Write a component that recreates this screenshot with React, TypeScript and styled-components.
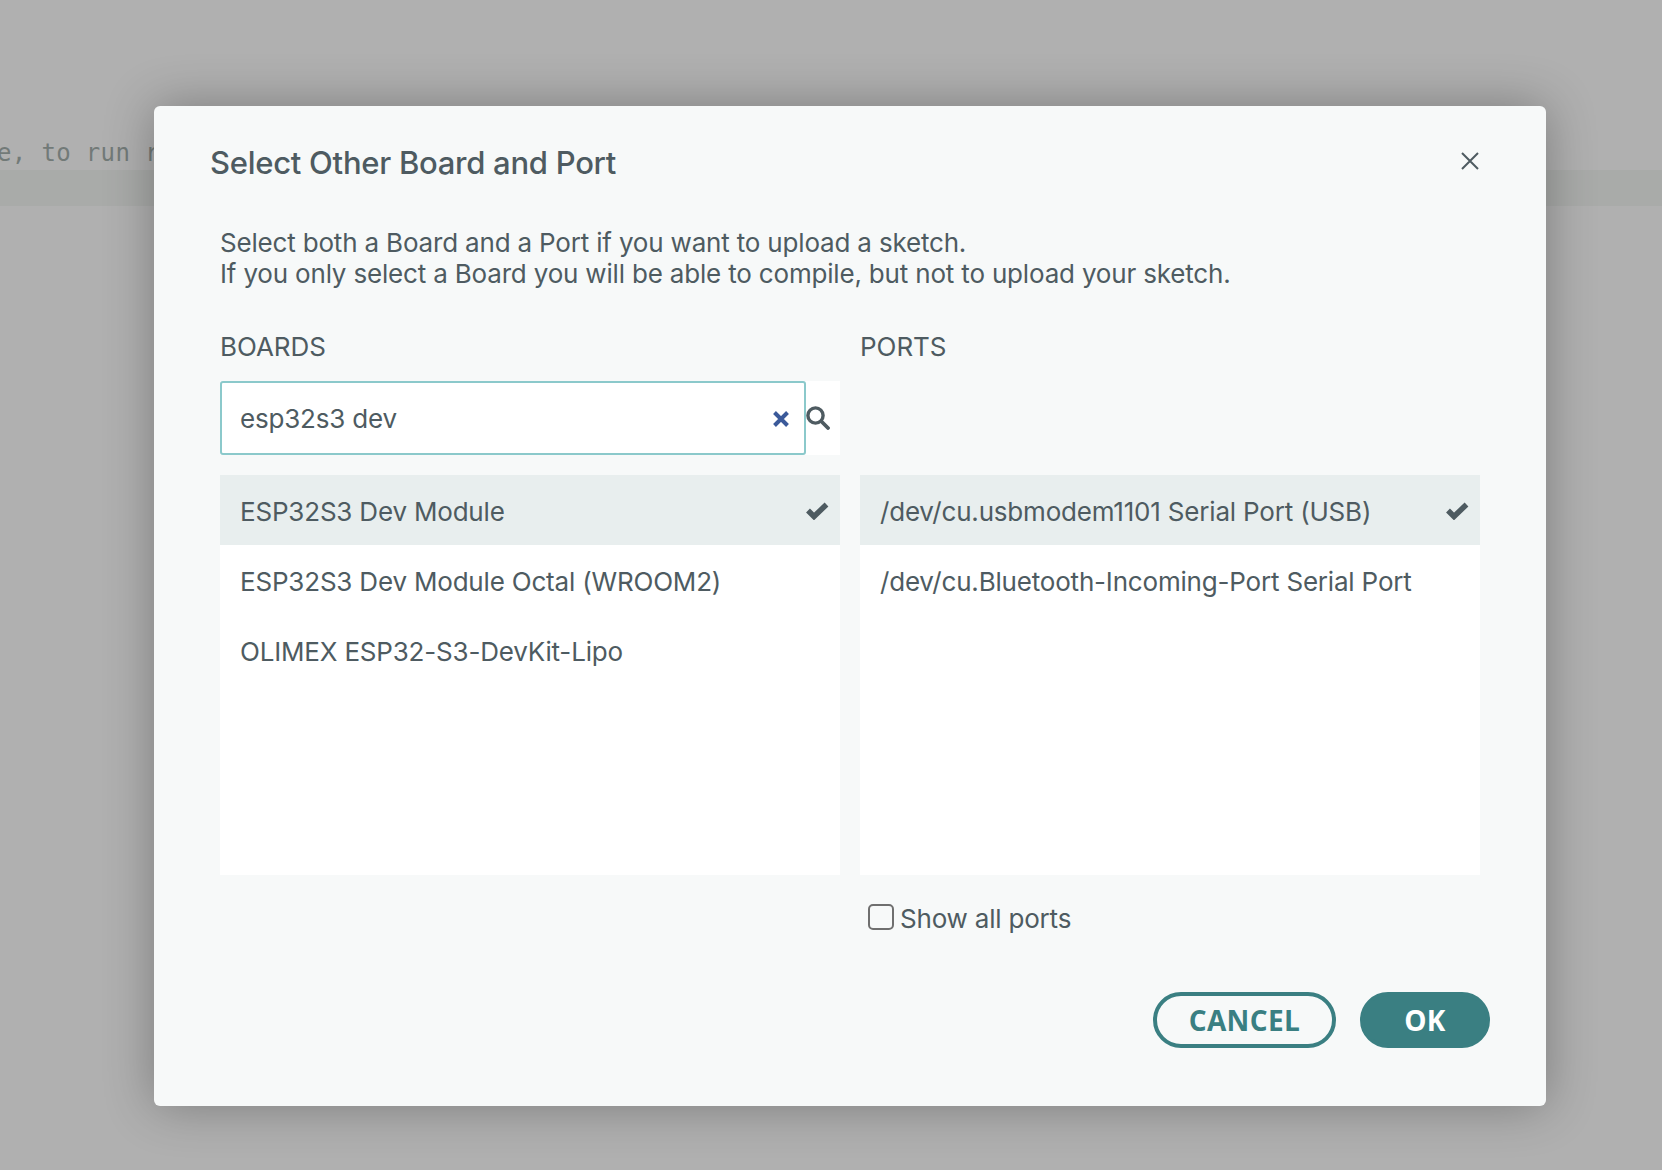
import * as React from "react";
import styled, { createGlobalStyle } from "styled-components";

const GlobalStyle = createGlobalStyle`
  html, body {
    margin: 0;
    padding: 0;
    height: 100%;
    overflow: hidden;
  }
  body {
    background: #b0b0b0;
    font-family: Inter, "Liberation Sans", sans-serif;
    color: #4e5b61;
  }
`;

const Page = styled.div`
  width: 1662px;
  height: 1170px;
  overflow: hidden;
  background: #b0b0b0;
`;

const EditorLine = styled.div`
  margin-top: 136px;
  height: 34px;
  line-height: 34px;
  text-indent: -3px;
  font-family: "DejaVu Sans Mono", "Liberation Mono", monospace;
  font-size: 24px;
  white-space: pre;
  color: #727a78;
  letter-spacing: 0.35px;
`;

const EditorHighlight = styled.div`
  height: 36px;
  background: #a9aba9;
`;

const Overlay = styled.div`
  position: absolute;
  inset: 0;
  padding: 106px 0 0 154px;
`;

const Dialog = styled.div`
  box-sizing: border-box;
  width: 1392px;
  height: 1000px;
  border-radius: 6px;
  background: #f7f9f9;
  box-shadow: 0 0 50px rgba(0, 0, 0, 0.3);
  padding: 36px 66px 0 56px;
  display: flex;
  flex-direction: column;
`;

const Header = styled.div`
  display: flex;
  justify-content: space-between;
  align-items: center;
  height: 40px;
  padding-bottom: 1px;
  margin-bottom: -1px;
  font-size: 31px;
  font-weight: 500;
  letter-spacing: -0.27px;
  color: #4e5b61;
`;

const CloseIcon = styled.svg`
  width: 20px;
  height: 20px;
  margin-top: -2px;
  stroke: #4e5b61;
  stroke-width: 2;
  fill: none;
`;

const Body = styled.div`
  padding: 0 0 0 10px;
  display: flex;
  flex-direction: column;
`;

const Intro = styled.p`
  margin: 46px 0 0;
  font-size: 26px;
  line-height: 30.5px;
  letter-spacing: -0.18px;
`;

const Columns = styled.div`
  margin-top: 41px;
  display: grid;
  grid-template-columns: 620px 620px;
  column-gap: 20px;
`;

const Column = styled.div`
  display: flex;
  flex-direction: column;
`;

const ColumnTitle = styled.div`
  height: 34px;
  line-height: 34px;
  font-size: 26px;
  margin-bottom: 17px;
  letter-spacing: -0.05px;
`;

const SearchBar = styled.div`
  display: flex;
  align-items: center;
  height: 74px;
  background: #fff;
  color: #4e5b61;
  margin-bottom: 20px;
`;

const SearchSpacer = styled.div`
  height: 74px;
  margin-bottom: 20px;
`;

const SearchField = styled.div`
  box-sizing: border-box;
  flex: 0 0 586px;
  height: 74px;
  display: flex;
  align-items: center;
  justify-content: space-between;
  padding: 1px 14px 0 18px;
  border: 2px solid #8bc9cb;
  border-radius: 3px;
  font-size: 26px;
  letter-spacing: -0.2px;
  background: #fff;
`;

const SearchIcon = styled.svg`
  width: 24px;
  height: 24px;
  fill: none;
  stroke: #4e5b61;
`;

const ClearIcon = styled.svg`
  width: 18px;
  height: 18px;
  stroke: #3b5a9a;
  stroke-width: 4;
  fill: none;
`;

const List = styled.div`
  height: 400px;
  background: #fff;
`;

const Row = styled.div<{ $selected?: boolean }>`
  box-sizing: border-box;
  height: 70px;
  display: flex;
  align-items: center;
  justify-content: space-between;
  padding: 2px 11px 0 20px;
  font-size: 26px;
  letter-spacing: -0.19px;
  background: ${(p) => (p.$selected ? "#e8eeee" : "transparent")};
`;

const CheckIcon = styled.svg`
  width: 24px;
  height: 18px;
  fill: none;
  stroke: #4e5b61;
  stroke-width: 5.5;
`;

const PortOption = styled.label`
  display: flex;
  align-items: center;
  margin: 26px 0 0 8px;
  height: 34px;
  font-size: 26px;
  letter-spacing: -0.2px;
`;

const CheckBox = styled.span`
  box-sizing: border-box;
  width: 26px;
  height: 26px;
  border: 2px solid #6f6f6f;
  border-radius: 5px;
  margin: -3px 6px 0 0;
  background: #f7f9f9;
`;

const Footer = styled.div`
  display: flex;
  justify-content: flex-end;
  gap: 24px;
  margin: 57px -10px 0 0;
`;

const Button = styled.button<{ $primary?: boolean }>`
  box-sizing: border-box;
  height: 56px;
  min-width: ${(p) => (p.$primary ? "130px" : "183px")};
  border-radius: 28px;
  border: 4px solid #3a7f82;
  background: ${(p) => (p.$primary ? "#3a7f82" : "#f7f9f9")};
  color: ${(p) => (p.$primary ? "#fff" : "#3a7f82")};
  font-family: "Open Sans", "Liberation Sans", sans-serif;
  font-weight: 700;
  font-size: 28px;
  letter-spacing: 0.4px;
  padding: 0;
`;

const Check = () => (
  <CheckIcon viewBox="0 0 24 18">
    <path d="M3 8.5 L9 14.5 L21.5 2.5" />
  </CheckIcon>
);

export default function App() {
  return (
    <Page>
      <GlobalStyle />
      <EditorLine>e, to run r</EditorLine>
      <EditorHighlight />
      <Overlay>
        <Dialog>
          <Header>
            Select Other Board and Port
            <CloseIcon viewBox="0 0 20 20">
              <path d="M2 2 L18 18 M18 2 L2 18" />
            </CloseIcon>
          </Header>
          <Body>
            <Intro>
              Select both a Board and a Port if you want to upload a sketch.
              <br />
              If you only select a Board you will be able to compile, but not to upload your sketch.
            </Intro>
            <Columns>
              <Column>
                <ColumnTitle>BOARDS</ColumnTitle>
                <SearchBar>
                  <SearchField>
                    esp32s3 dev
                    <ClearIcon viewBox="0 0 18 18">
                      <path d="M2.5 2.5 L15.5 15.5 M15.5 2.5 L2.5 15.5" />
                    </ClearIcon>
                  </SearchField>
                  <SearchIcon viewBox="0 0 24 24">
                    <circle cx="9.5" cy="9.5" r="7.6" strokeWidth="3.4" />
                    <path d="M15.5 15.5 L22 22" strokeWidth="3.8" strokeLinecap="round" />
                  </SearchIcon>
                </SearchBar>
                <List>
                  <Row $selected>
                    ESP32S3 Dev Module
                    <Check />
                  </Row>
                  <Row>ESP32S3 Dev Module Octal (WROOM2)</Row>
                  <Row>OLIMEX ESP32-S3-DevKit-Lipo</Row>
                </List>
              </Column>
              <Column>
                <ColumnTitle>PORTS</ColumnTitle>
                <SearchSpacer />
                <List>
                  <Row $selected>
                    /dev/cu.usbmodem1101 Serial Port (USB)
                    <Check />
                  </Row>
                  <Row>/dev/cu.Bluetooth-Incoming-Port Serial Port</Row>
                </List>
                <PortOption>
                  <CheckBox />
                  Show all ports
                </PortOption>
              </Column>
            </Columns>
            <Footer>
              <Button>CANCEL</Button>
              <Button $primary>OK</Button>
            </Footer>
          </Body>
        </Dialog>
      </Overlay>
    </Page>
  );
}
